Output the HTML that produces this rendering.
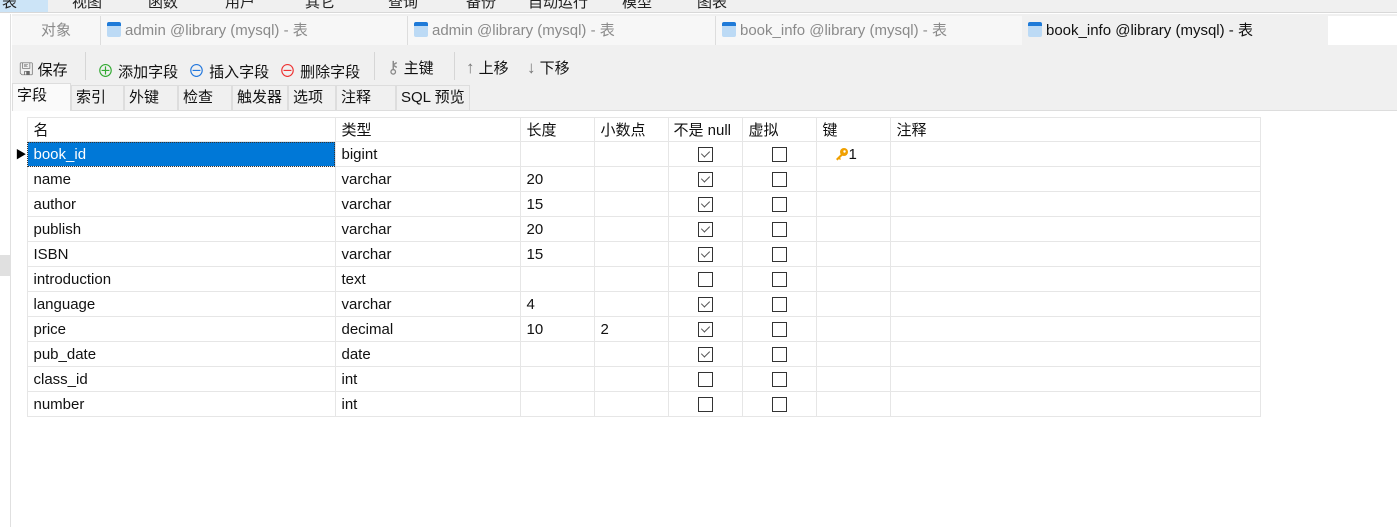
<!DOCTYPE html><html><head><meta charset="utf-8"><style>
*{margin:0;padding:0;box-sizing:border-box}
body{width:1397px;height:527px;overflow:hidden;background:#fff;font-family:"Liberation Sans","Noto Sans CJK SC",sans-serif;font-size:15px;color:#111;position:relative}
.a{position:absolute}
.menu{left:0;top:0;width:1397px;height:13px;background:#f0f0f0;border-bottom:1px solid #d8d8d8;overflow:hidden}
.menu span{position:absolute;top:-9px;font-size:15px;color:#222}
.left{left:0;top:14px;width:11px;height:513px;background:#fff;border-right:1px solid #e0e0e0}
.tabs{left:12px;top:14px;width:1385px;height:32px;background:#f0f0f0}
.tab{position:absolute;top:2px;height:29px;background:#f7f7f7;border-left:1px solid #ddd;color:#8a8a8a;font-size:15px;line-height:30px;padding-left:6px;white-space:nowrap}
.ic{display:inline-block;width:14px;height:15px;vertical-align:-2px;margin-right:4px;background:linear-gradient(#1e7ad8 0 4px,#bcdaf5 4px);border-radius:2px}
.tb{left:12px;top:46px;width:1385px;height:38px;background:#f0f0f0}
.tb span{position:absolute;top:11px;font-size:15px;white-space:nowrap}
.tb b{font-size:17px}
.sep{position:absolute;top:6px;width:1px;height:28px;background:#d6d6d6}
.sub{left:12px;top:84px;width:1385px;height:27px;background:#f0f0f0;border-bottom:1px solid #ddd}
.st{position:absolute;top:1px;height:25px;border:1px solid #ddd;border-bottom:none;background:#f0f0f0;font-size:15px;line-height:24px;padding-left:4px}
table{position:absolute;left:12px;top:117px;border-collapse:collapse}
td{height:25px;border:1px solid #e6e6e6;font-size:15px;padding-left:6px;white-space:nowrap;vertical-align:middle}
td.c{text-align:center;padding:0}
.cb{display:inline-block;width:15px;height:15px;border:1.5px solid #333;vertical-align:middle;position:relative}
.cb.k::after{content:"";position:absolute;left:4px;top:1px;width:4px;height:7px;border:solid #555;border-width:0 1.5px 1.5px 0;transform:rotate(45deg)}
tr.h td{height:24px}
td.rh{width:15px;padding:0;border-left:none;border-top:none;border-bottom:none;border-right:1px solid #e6e6e6}
</style></head><body>
<div class="a menu"><span style="left:0;background:#cce4f7;width:48px;height:22px;top:-9px;padding-left:2px">表</span><span style="left:72px">视图</span><span style="left:148px">函数</span><span style="left:225px">用户</span><span style="left:305px">其它</span><span style="left:388px">查询</span><span style="left:466px">备份</span><span style="left:528px">自动运行</span><span style="left:622px">模型</span><span style="left:697px">图表</span></div>
<div class="a left"><div class="a" style="left:0;top:241px;width:10px;height:21px;background:#e0e0e0"></div></div>
<div class="a tabs">
<div class="tab" style="left:0;width:88px;border:none;background:#f7f7f7;padding-left:29px">对象</div>
<div class="tab" style="left:88px;width:307px"><i class="ic"></i>admin @library (mysql) - 表</div>
<div class="tab" style="left:395px;width:308px"><i class="ic"></i>admin @library (mysql) - 表</div>
<div class="tab" style="left:703px;width:307px"><i class="ic"></i>book_info @library (mysql) - 表</div>
<div class="tab" style="left:1010px;width:306px;background:#f0f0f0;color:#111;border-left:none"><i class="ic"></i>book_info @library (mysql) - 表</div>
<div class="tab" style="left:1316px;width:69px;background:#fff;border:none"></div>
</div>
<div class="a tb">
<span style="left:7px"><b style="color:#666;font-weight:normal">🖫</b> 保存</span>
<div class="sep" style="left:73px"></div>
<span style="left:85px"><b style="color:#3a3;font-weight:normal">⊕</b> 添加字段</span>
<span style="left:176px"><b style="color:#27d;font-weight:normal">⊖</b> 插入字段</span>
<span style="left:267px"><b style="color:#e33;font-weight:normal">⊖</b> 删除字段</span>
<div class="sep" style="left:362px"></div>
<span style="left:375px;color:#111"><b style="color:#888;font-weight:normal">⚷</b> 主键</span>
<div class="sep" style="left:442px"></div>
<span style="left:454px"><b style="color:#777;font-weight:normal">↑</b> 上移</span>
<span style="left:515px"><b style="color:#777;font-weight:normal">↓</b> 下移</span>
</div>
<div class="a sub">
<div class="st" style="left:0;width:59px;top:-1px;height:28px;background:#fafafa">字段</div>
<div class="st" style="left:59px;width:53px">索引</div>
<div class="st" style="left:112px;width:54px">外键</div>
<div class="st" style="left:166px;width:54px">检查</div>
<div class="st" style="left:220px;width:56px">触发器</div>
<div class="st" style="left:276px;width:48px">选项</div>
<div class="st" style="left:324px;width:60px">注释</div>
<div class="st" style="left:384px;width:74px">SQL 预览</div>
</div>
<table>
<tr class="h"><td class="rh"></td><td style="width:308px">名</td><td style="width:185px">类型</td><td style="width:74px">长度</td><td style="width:74px">小数点</td><td style="width:74px;padding-left:5px">不是 null</td><td style="width:74px">虚拟</td><td style="width:74px">键</td><td style="width:370px">注释</td></tr>
<tr><td class="rh" style="text-align:right;font-size:11px;color:#000">▶</td><td style="background:#0078d7;color:#fff;outline:1px dotted #333;outline-offset:-1px">book_id</td><td>bigint</td><td></td><td></td><td class="c"><i class="cb k"></i></td><td class="c"><i class="cb"></i></td><td style="padding-left:18px"><svg width="14" height="14" viewBox="0 0 14 14" style="vertical-align:-2px"><circle cx="9" cy="5" r="4" fill="#f0a000"/><circle cx="9.5" cy="4.5" r="1.2" fill="#fff"/><path d="M6 7 L1 12 L2.5 13.5 L4 12 L5 13 L6 12 L5 11 L8 8Z" fill="#f0a000"/></svg>1</td><td></td></tr>
<tr><td class="rh"></td><td>name</td><td>varchar</td><td>20</td><td></td><td class="c"><i class="cb k"></i></td><td class="c"><i class="cb"></i></td><td></td><td></td></tr>
<tr><td class="rh"></td><td>author</td><td>varchar</td><td>15</td><td></td><td class="c"><i class="cb k"></i></td><td class="c"><i class="cb"></i></td><td></td><td></td></tr>
<tr><td class="rh"></td><td>publish</td><td>varchar</td><td>20</td><td></td><td class="c"><i class="cb k"></i></td><td class="c"><i class="cb"></i></td><td></td><td></td></tr>
<tr><td class="rh"></td><td>ISBN</td><td>varchar</td><td>15</td><td></td><td class="c"><i class="cb k"></i></td><td class="c"><i class="cb"></i></td><td></td><td></td></tr>
<tr><td class="rh"></td><td>introduction</td><td>text</td><td></td><td></td><td class="c"><i class="cb"></i></td><td class="c"><i class="cb"></i></td><td></td><td></td></tr>
<tr><td class="rh"></td><td>language</td><td>varchar</td><td>4</td><td></td><td class="c"><i class="cb k"></i></td><td class="c"><i class="cb"></i></td><td></td><td></td></tr>
<tr><td class="rh"></td><td>price</td><td>decimal</td><td>10</td><td>2</td><td class="c"><i class="cb k"></i></td><td class="c"><i class="cb"></i></td><td></td><td></td></tr>
<tr><td class="rh"></td><td>pub_date</td><td>date</td><td></td><td></td><td class="c"><i class="cb k"></i></td><td class="c"><i class="cb"></i></td><td></td><td></td></tr>
<tr><td class="rh"></td><td>class_id</td><td>int</td><td></td><td></td><td class="c"><i class="cb"></i></td><td class="c"><i class="cb"></i></td><td></td><td></td></tr>
<tr><td class="rh"></td><td>number</td><td>int</td><td></td><td></td><td class="c"><i class="cb"></i></td><td class="c"><i class="cb"></i></td><td></td><td></td></tr>
</table>
</body></html>
